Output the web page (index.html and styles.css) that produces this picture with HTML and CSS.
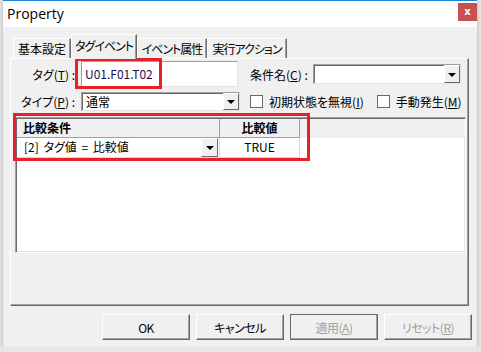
FILE: index.html
```html
<!DOCTYPE html>
<html lang="ja">
<head>
    <meta charset="UTF-8">
    <title>Property</title>
    <link rel="stylesheet" href="styles.css">
</head>
<body>
    <div class="window">
        <div class="titlebar">
            <span class="title">Property</span>
            <span class="close">x</span>
        </div>

        <div class="tabs">
            <div class="tab tab-1">基本設定</div>
            <div class="tab tab-2 active">タグイベント</div>
            <div class="tab tab-3">イベント属性</div>
            <div class="tab tab-4">実行アクション</div>
        </div>

        <div class="panel">
            <div class="form-row">
                <span class="lbl">タグ(<u>T</u>) :</span>
                <div class="textbox">U01.F01.T02</div>
                <span class="lbl lbl-cond">条件名(<u>C</u>) :</span>
                <div class="combo combo-cond">
                    <span class="combo-text"></span>
                    <span class="drop"><i class="arrow"></i></span>
                </div>
            </div>

            <div class="form-row row-type">
                <span class="lbl">タイプ(<u>P</u>) :</span>
                <div class="combo combo-type">
                    <span class="combo-text">通常</span>
                    <span class="drop"><i class="arrow"></i></span>
                </div>
                <span class="check check-first"><i class="box"></i>初期状態を無視(<u>I</u>)</span>
                <span class="check"><i class="box"></i>手動発生(<u>M</u>)</span>
            </div>

            <div class="grid">
                <div class="grid-head">
                    <div class="cell col-cond">比較条件</div>
                    <div class="cell col-val">比較値</div>
                </div>
                <div class="grid-row">
                    <div class="cell col-cond">
                        <span>[2] タグ値 = 比較値</span>
                        <span class="drop"><i class="arrow"></i></span>
                    </div>
                    <div class="cell col-val">TRUE</div>
                </div>
            </div>

            <!-- 赤枠 (注釈) -->
            <div class="mark mark-tag"></div>
            <div class="mark mark-grid"></div>
        </div>

        <div class="buttons">
            <button class="btn">OK</button>
            <button class="btn">キャンセル</button>
            <button class="btn btn-default" disabled>適用(<u>A</u>)</button>
            <button class="btn" disabled>リセット(<u>R</u>)</button>
        </div>
    </div>
</body>
</html>
```

FILE: styles.css
```css
/* Page */
body {
    margin: 0;
    background: #e6e6e6;
    font-family: "Noto Sans CJK JP", sans-serif;
    font-size: 12px;
    font-feature-settings: "palt";
    color: #000;
}

u {
    text-decoration: underline;
    text-underline-offset: 1px;
}

.window {
    margin-left: 3px;
    width: 474px;
    height: 346px;
    border-top: 1px solid #1883d7;
    background: #f0f0f0;
    box-shadow: 0 0 4px rgba(0, 0, 0, 0.25);
}

/* Title bar */
.titlebar {
    height: 26px;
    background: #fff;
    display: flex;
    justify-content: space-between;
    align-items: flex-start;
}

    .titlebar .title {
        font-family: "Open Sans", sans-serif;
        font-size: 14px;
        line-height: 26px;
        padding-left: 4px;
    }

    .titlebar .close {
        width: 19px;
        height: 18px;
        margin-top: 2px;
        background: #c75050;
        color: #fff;
        font-family: "DejaVu Sans", sans-serif;
        font-weight: bold;
        font-size: 10px;
        line-height: 17px;
        text-align: center;
    }

/* Tabs */
.tabs {
    display: flex;
    align-items: flex-end;
    height: 25px;
    margin-top: 6px;
    padding-left: 10px;
}

.tab {
    height: 20px;
    box-sizing: border-box;
    line-height: 19px;
    text-align: center;
    letter-spacing: -1px;
    border-top: 1px solid #fff;
    border-left: 1px solid #fff;
    border-right: 1px solid #696969;
    box-shadow: inset -1px 0 0 #a0a0a0;
    white-space: nowrap;
}

.tab-1 { width: 58px; letter-spacing: 0; }
.tab-2 { width: 66px; }
.tab-3 { width: 70px; }
.tab-4 { width: 80px; }

    .tab.active {
        height: 25px;
        line-height: 21px;
        background: #f0f0f0;
        position: relative;
        z-index: 1;
        margin-bottom: -1px;
    }

/* Panel */
.panel {
    position: relative;
    margin-left: 7px;
    width: 457px;
    height: 246px;
    border-top: 1px solid #fff;
    border-left: 1px solid #fff;
    border-right: 1px solid #696969;
    border-bottom: 1px solid #696969;
    box-shadow: inset -1px -1px 0 #a0a0a0;
}

.form-row {
    display: flex;
    align-items: center;
    height: 26px;
    margin-top: 2px;
}

.row-type {
    height: 19px;
    margin-top: 5px;
}

.lbl {
    width: 70px;
    padding-right: 6px;
    text-align: right;
    box-sizing: border-box;
    white-space: nowrap;
}

.lbl-cond {
    width: auto;
    margin-left: 12px;
    padding-right: 5px;
}

.textbox {
    width: 157px;
    height: 26px;
    box-sizing: border-box;
    padding-left: 3px;
    line-height: 24px;
    font-size: 12px;
    color: #1a1050;
    background: #fff;
    border: 1px solid;
    border-color: #a0a0a0 #e3e3e3 #e3e3e3 #a0a0a0;
}

.combo {
    display: flex;
    height: 20px;
    box-sizing: border-box;
    background: #fff;
    border: 1px solid;
    border-color: #a0a0a0 #e3e3e3 #e3e3e3 #a0a0a0;
    box-shadow: inset 1px 1px 0 #696969;
}

.combo-cond {
    width: 148px;
}

.combo-type {
    width: 159px;
    height: 19px;
}

.combo-text {
    flex: 1;
    padding-left: 4px;
    line-height: 17px;
}

.drop {
    width: 16px;
    background: #f0f0f0;
    border-top: 1px solid #fff;
    border-left: 1px solid #fff;
    border-right: 1px solid #696969;
    border-bottom: 1px solid #696969;
    box-sizing: border-box;
    display: flex;
    align-items: center;
    justify-content: center;
}

.arrow {
    width: 0;
    height: 0;
    border-left: 4px solid transparent;
    border-right: 4px solid transparent;
    border-top: 4px solid #000;
    margin-top: 1px;
}

/* Checkboxes */
.check {
    display: flex;
    align-items: center;
    white-space: nowrap;
}

.check-first {
    margin-left: 10px;
    margin-right: 13px;
}

.box {
    width: 11px;
    height: 11px;
    margin-right: 6px;
    background: #fff;
    border: 1px solid #696969;
}

/* Grid */
.grid {
    margin: 6px 0 0 4px;
    width: 451px;
    height: 136px;
    box-sizing: border-box;
    background: #fff;
    border: 1px solid;
    border-color: #a0a0a0 #fff #fff #a0a0a0;
    box-shadow: inset 1px 1px 0 #696969, inset -1px -1px 0 #e3e3e3;
    padding: 1px 0 0 1px;
}

.grid-head {
    display: flex;
    height: 19px;
    background: #f0f0f0;
    font-weight: bold;
}

    .grid-head .cell {
        border-right: 1px solid #a0a0a0;
        border-bottom: 1px solid #a0a0a0;
    }

.grid-row {
    display: flex;
    height: 20px;
}

    .grid-row .cell {
        border-right: 1px solid #d8d8d8;
        border-bottom: 1px solid #d8d8d8;
    }

.cell {
    box-sizing: border-box;
    line-height: 18px;
}

.col-cond {
    width: 203px;
    padding-left: 6px;
}

.grid-row .col-cond {
    display: flex;
    justify-content: space-between;
    padding-left: 7px;
    padding-right: 1px;
    word-spacing: 2px;
}

    .grid-row .col-cond .drop {
        width: 17px;
    }

.col-val {
    width: 80px;
    text-align: center;
}

/* Annotation frames */
.mark {
    position: absolute;
    border: 3px solid #e8202a;
    box-sizing: border-box;
}

.mark-tag {
    left: 64px;
    top: -1px;
    width: 87px;
    height: 31px;
}

.mark-grid {
    left: 2px;
    top: 54px;
    width: 297px;
    height: 48px;
}

/* Buttons */
.buttons {
    display: flex;
    justify-content: flex-end;
    gap: 6px;
    padding: 8px 5px 0 0;
}

.btn {
    width: 88px;
    height: 26px;
    font-family: "Noto Sans CJK JP", sans-serif;
    font-size: 12px;
    font-feature-settings: "palt";
    letter-spacing: -0.5px;
    background: #f0f0f0;
    border: 1px solid;
    border-color: #fff #696969 #696969 #fff;
    box-shadow: inset -1px -1px 0 #a0a0a0;
    padding: 0;
}

    .btn:disabled {
        color: #a0a0a0;
    }

.btn-default {
    outline: 1px solid #696969;
    outline-offset: -1px;
}
```
